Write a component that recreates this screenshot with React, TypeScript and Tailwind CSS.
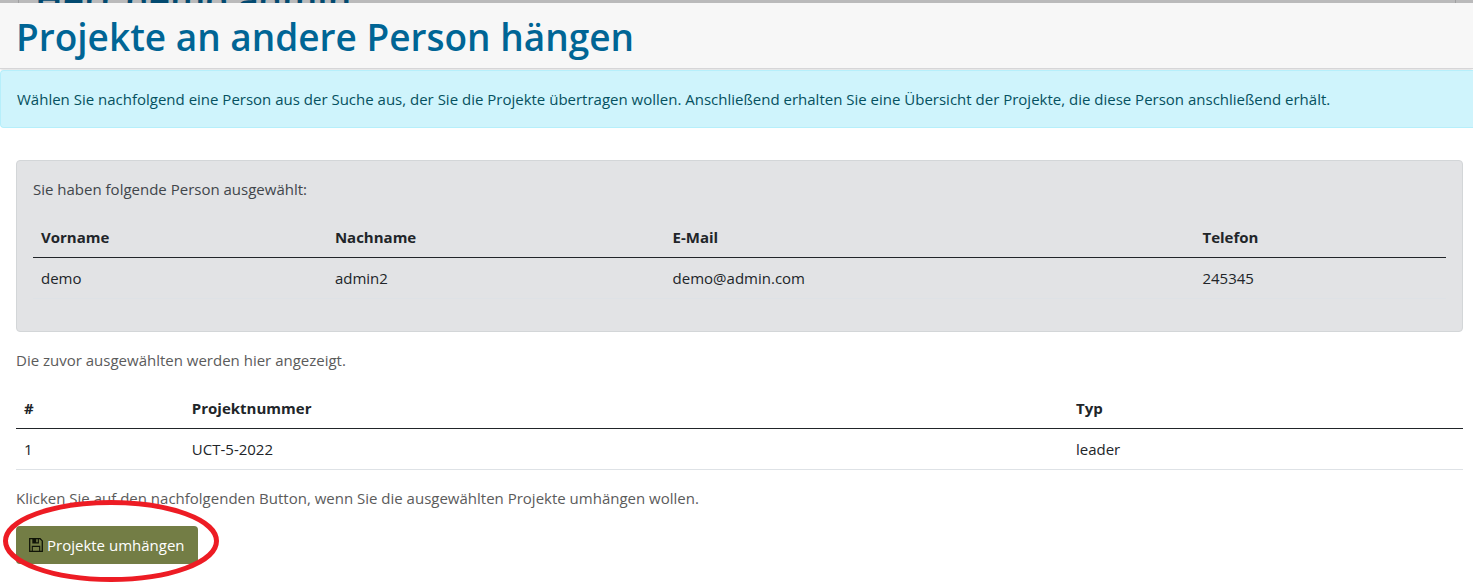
import React from 'react';

const people = [
  { first: 'demo', last: 'admin2', mail: 'demo@admin.com', phone: '245345' },
];

const projects = [{ id: 1, number: 'UCT-5-2022', type: 'leader' }];

function SaveIcon() {
  return (
    <svg viewBox="0 0 14 14" className="size-[14px] shrink-0" fill="none" stroke="#101408" aria-hidden="true">
      <path d="M.7.7h10.4l2.2 2.2v10.4H.7z" strokeWidth="1.3" />
      <path d="M3.3.8h6.6v4.7H3.3z" fill="#101408" stroke="none" />
      <path d="M7.2 1.2h1.6v3H7.2z" fill="#737d45" stroke="none" />
      <path d="M3.3 13.3V8.4h7.4v4.9" strokeWidth="1.1" />
    </svg>
  );
}

export default function App() {
  return (
    <div className="relative min-h-screen overflow-hidden bg-white font-['Open_Sans','Noto_Sans',sans-serif] text-[15px] leading-6 text-[#212529]">
      <div className="relative h-[3px] overflow-hidden bg-[#bababb]">
        <div className="absolute -bottom-[10px] left-[18px] right-[17px] border-x border-[#a0a0a1] pl-4 text-[37px] font-semibold leading-7 text-[#034a70]">
          Herr demo admin
        </div>
      </div>
      <header className="border-b border-[#d6d6d8] bg-[#f7f7f7] px-4 pt-[10px] pb-[7px] shadow-sm">
        <h1 className="text-[37px] font-semibold leading-[48px] text-[#006595]">
          Projekte an andere Person hängen
        </h1>
      </header>
      <div role="alert" className="mt-px rounded-l border border-r-0 border-[#b6effb] bg-[#cff4fc] p-4 text-[#055160]">
        Wählen Sie nachfolgend eine Person aus der Suche aus, der Sie die Projekte übertragen wollen. Anschließend erhalten Sie eine Übersicht der Projekte, die diese Person anschließend erhält.
      </div>

      <main className="flex flex-col gap-4 pt-8 pr-[10px] pb-4 pl-4">
        <section className="flex flex-col gap-4 rounded border border-[#d3d6d8] bg-[#e2e3e5] px-4 pt-4 pb-8">
          <p className="text-[#41464b]">Sie haben folgende Person ausgewählt:</p>
          <table className="w-full table-fixed border-collapse text-left">
            <thead>
              <tr className="border-b border-[#212529]">
                <th className="w-[20.8%] p-2 font-bold">Vorname</th>
                <th className="w-[23.9%] p-2 font-bold">Nachname</th>
                <th className="w-[37.5%] p-2 font-bold">E-Mail</th>
                <th className="p-2 font-bold">Telefon</th>
              </tr>
            </thead>
            <tbody>
              {people.map((p) => (
                <tr key={p.mail} className="border-b border-[#dee2e6]">
                  <td className="p-2">{p.first}</td>
                  <td className="p-2">{p.last}</td>
                  <td className="p-2">{p.mail}</td>
                  <td className="p-2">{p.phone}</td>
                </tr>
              ))}
            </tbody>
          </table>
        </section>

        <p className="text-[#5b5b5b]">Die zuvor ausgewählten werden hier angezeigt.</p>

        <table className="w-full table-fixed border-collapse text-left">
          <thead>
            <tr className="border-b border-[#212529]">
              <th className="w-[11.6%] p-2 font-bold">#</th>
              <th className="w-[61.1%] p-2 font-bold">Projektnummer</th>
              <th className="p-2 font-bold">Typ</th>
            </tr>
          </thead>
          <tbody>
            {projects.map((p) => (
              <tr key={p.id} className="border-b border-[#dee2e6]">
                <td className="p-2">{p.id}</td>
                <td className="p-2">{p.number}</td>
                <td className="p-2">{p.type}</td>
              </tr>
            ))}
          </tbody>
        </table>

        <p className="text-[#5b5b5b]">
          Klicken Sie auf den nachfolgenden Button, wenn Sie die ausgewählten Projekte umhängen wollen.
        </p>

        <div className="relative self-start">
          <button type="button" className="flex items-center gap-1 rounded bg-[#737d45] px-[13px] py-[7px] text-white">
            <SaveIcon />
            Projekte umhängen
          </button>
          <svg
            viewBox="0 0 216 82"
            className="pointer-events-none absolute -top-[26px] -left-[13px] h-[82px] w-[216px] max-w-none"
            fill="none"
            aria-hidden="true"
          >
            <ellipse cx="108" cy="41" rx="105.5" ry="38.5" stroke="#ed1c24" strokeWidth="5" />
          </svg>
        </div>
      </main>
    </div>
  );
}
